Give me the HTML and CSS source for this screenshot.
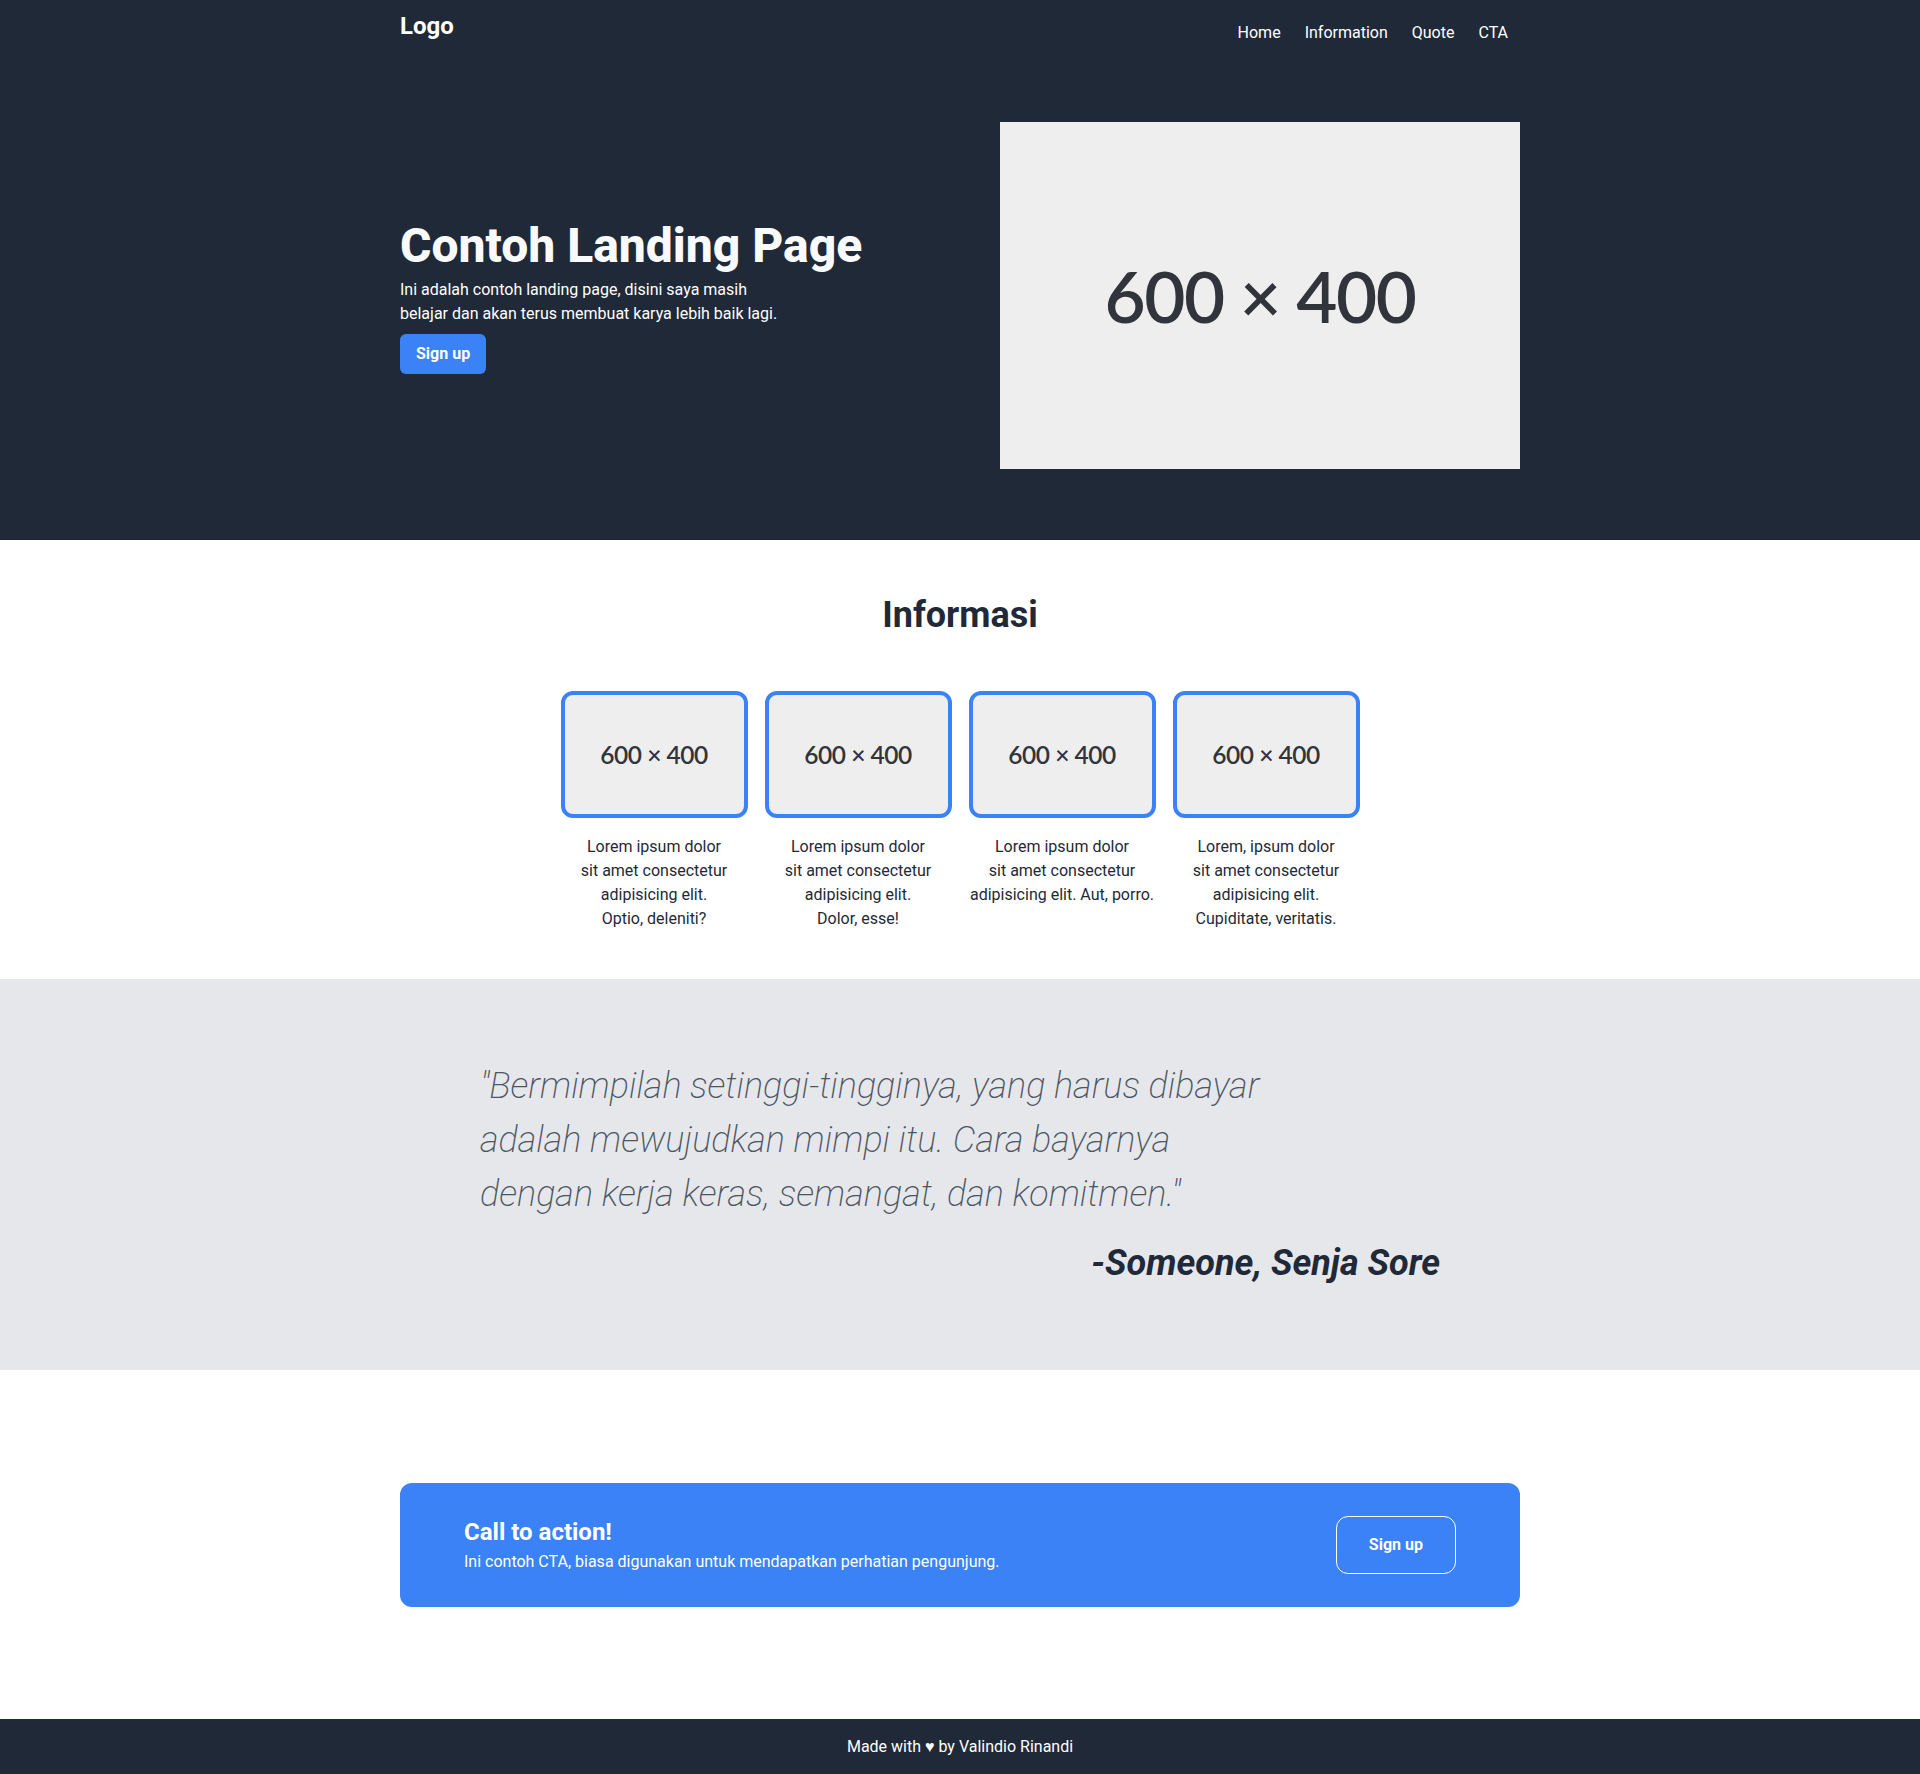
FILE: index.html
```html
<!DOCTYPE html>
<html lang="id">
<head>
<meta charset="utf-8">
<title>Contoh Landing Page</title>
<link rel="stylesheet" href="styles.css">
</head>
<body>
<section class="hero">
  <div class="container">
    <header class="topbar">
      <a class="logo" href="#">Logo</a>
      <nav class="nav">
        <a href="#">Home</a>
        <a href="#">Information</a>
        <a href="#">Quote</a>
        <a href="#">CTA</a>
      </nav>
    </header>
    <div class="hero-row">
      <div class="hero-text">
        <h1 class="hero-title">Contoh Landing Page</h1>
        <p class="hero-desc">Ini adalah contoh landing page, disini saya masih belajar dan akan terus membuat karya lebih baik lagi.</p>
        <a class="btn-primary" href="#">Sign up</a>
      </div>
      <div class="ph ph-lg">600 × 400</div>
    </div>
  </div>
</section>

<section class="info">
  <h2 class="info-title">Informasi</h2>
  <div class="cards">
    <div class="card">
      <div class="ph ph-sm">600 × 400</div>
      <p class="card-text">Lorem ipsum dolor<br>sit amet consectetur<br>adipisicing elit.<br>Optio, deleniti?</p>
    </div>
    <div class="card">
      <div class="ph ph-sm">600 × 400</div>
      <p class="card-text">Lorem ipsum dolor<br>sit amet consectetur<br>adipisicing elit.<br>Dolor, esse!</p>
    </div>
    <div class="card">
      <div class="ph ph-sm">600 × 400</div>
      <p class="card-text">Lorem ipsum dolor<br>sit amet consectetur<br>adipisicing elit. Aut, porro.</p>
    </div>
    <div class="card">
      <div class="ph ph-sm">600 × 400</div>
      <p class="card-text">Lorem, ipsum dolor<br>sit amet consectetur<br>adipisicing elit.<br>Cupiditate, veritatis.</p>
    </div>
  </div>
</section>

<section class="quote">
  <div class="quote-inner">
    <p class="quote-text">"Bermimpilah setinggi-tingginya, yang harus dibayar adalah mewujudkan mimpi itu. Cara bayarnya dengan kerja keras, semangat, dan komitmen."</p>
    <p class="quote-author">-Someone, Senja Sore</p>
  </div>
</section>

<section class="cta">
  <div class="container">
    <div class="cta-box">
      <div class="cta-text">
        <h3 class="cta-title">Call to action!</h3>
        <p class="cta-desc">Ini contoh CTA, biasa digunakan untuk mendapatkan perhatian pengunjung.</p>
      </div>
      <a class="btn-outline" href="#">Sign up</a>
    </div>
  </div>
</section>

<footer class="footer">Made with ♥ by Valindio Rinandi</footer>
</body>
</html>
```

FILE: styles.css
```css
* { box-sizing: border-box; }

body {
  margin: 0;
  font-family: Roboto, "Liberation Sans", sans-serif;
  color: #1f2937;
  background: #ffffff;
}

a { text-decoration: none; color: inherit; }

.container {
  width: 1120px;
  margin: 0 auto;
}

/* Hero */
.hero {
  background: #1f2937;
  color: #ffffff;
}

.topbar {
  height: 64px;
  display: flex;
  justify-content: space-between;
  align-items: flex-start;
  padding-top: 10px;
}

.logo {
  font-size: 24px;
  line-height: 32px;
  font-weight: 700;
}

.nav {
  display: flex;
  padding-top: 11px;
}

.nav a {
  font-size: 16px;
  line-height: 24px;
  padding: 0 12px;
}

.hero-row {
  display: flex;
  justify-content: space-between;
  align-items: center;
  margin-top: 58px;
  padding-bottom: 71px;
}

.hero-text {
  padding-top: 5px;
}

.hero-title {
  margin: 0 0 8px;
  font-size: 48px;
  line-height: 48px;
  font-weight: 800;
  color: #f9fafb;
}

.hero-desc {
  margin: 0 0 8px;
  max-width: 384px;
  font-size: 16px;
  line-height: 24px;
}

.btn-primary {
  display: inline-block;
  background: #3b82f6;
  color: #ffffff;
  font-weight: 700;
  font-size: 16px;
  line-height: 24px;
  padding: 8px 16px;
  border-radius: 6px;
}

/* Placeholder images */
.ph {
  display: flex;
  align-items: center;
  justify-content: center;
  background: #eeeeee;
  color: #31343b;
  font-family: Lato, "Open Sans", sans-serif;
  font-weight: 600;
  letter-spacing: -0.02em;
}

.ph-lg {
  width: 520px;
  height: 347px;
  font-size: 71px;
}

.ph-sm {
  width: 187px;
  height: 127px;
  font-size: 24.5px;
  border: 4px solid #3b82f6;
  border-radius: 12px;
}

/* Info */
.info {
  padding: 55px 0 48px;
}

.info-title {
  margin: 0 0 56px;
  text-align: center;
  font-size: 36px;
  line-height: 40px;
  font-weight: 700;
  color: #1f2937;
}

.cards {
  display: flex;
  justify-content: center;
  gap: 17px;
}

.card {
  width: 187px;
  display: flex;
  flex-direction: column;
  align-items: center;
}

.card-text {
  margin: 17px 0 0;
  text-align: center;
  font-size: 16px;
  line-height: 24px;
  color: #1f2937;
  white-space: nowrap;
}

/* Quote */
.quote {
  background: #e5e7eb;
  padding: 80px 0 87px;
}

.quote-inner {
  width: 960px;
  margin: 0 auto;
}

.quote-text {
  margin: 0;
  max-width: 800px;
  font-size: 36px;
  line-height: 54px;
  font-weight: 200;
  font-style: italic;
  color: #4b5563;
}

.quote-author {
  margin: 22px 0 0;
  text-align: right;
  font-size: 36px;
  line-height: 40px;
  font-weight: 700;
  font-style: italic;
  color: #1f2937;
}

/* CTA */
.cta {
  padding: 113px 0 112px;
}

.cta-box {
  display: flex;
  justify-content: space-between;
  align-items: center;
  background: #3b82f6;
  color: #ffffff;
  border-radius: 12px;
  padding: 33px 64px;
}

.cta-title {
  margin: 0;
  font-size: 24px;
  line-height: 32px;
  font-weight: 700;
}

.cta-desc {
  margin: 2px 0 0;
  font-size: 16px;
  line-height: 24px;
}

.btn-outline {
  display: inline-block;
  border: 1px solid #ffffff;
  border-radius: 12px;
  padding: 16px 32px;
  font-size: 16px;
  line-height: 24px;
  font-weight: 700;
  color: #ffffff;
}

/* Footer */
.footer {
  background: #1f2937;
  color: #ffffff;
  text-align: center;
  padding: 16px;
  font-size: 16px;
  line-height: 24px;
}
```
